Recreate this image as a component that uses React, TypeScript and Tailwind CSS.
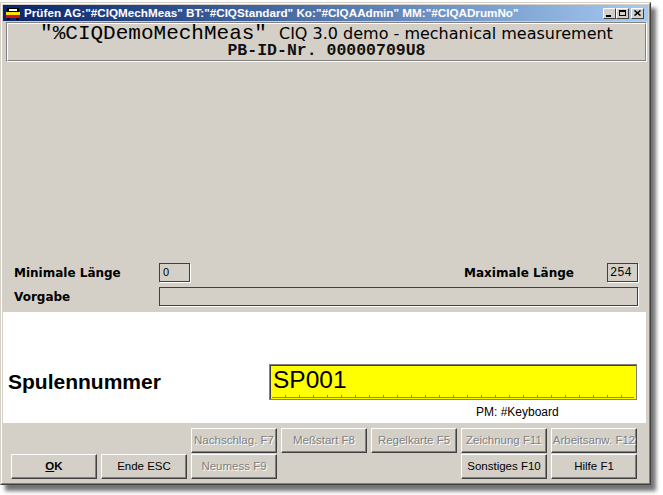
import React from "react";

const sans = "font-['Liberation_Sans',Arial,sans-serif]";
const dejavu = "font-['DejaVu_Sans',Verdana,sans-serif]";
const mono = "font-['Liberation_Mono','Courier_New',monospace]";

const AppIcon = () => (
  <svg width="14" height="13" viewBox="0 0 14 13">
    <rect x="1" y="1" width="12" height="4" fill="#000" />
    <rect x="3" y="2" width="8" height="2" fill="#fff" />
    <rect x="0" y="5" width="14" height="3" fill="#ffe000" />
    <rect x="0" y="8" width="14" height="3" fill="#d01010" />
    <rect x="1" y="11" width="3" height="2" fill="#000" />
    <rect x="10" y="11" width="3" height="2" fill="#000" />
  </svg>
);

const CapButton = ({ children }: { children: React.ReactNode }) => (
  <div className="w-[13px] h-[11px] bg-[#d4d0c8] border border-t-white border-l-white border-r-[#404040] border-b-[#404040] flex items-center justify-center">
    {children}
  </div>
);

const Btn = ({
  label,
  disabled,
  col,
  bold,
}: {
  label: React.ReactNode;
  disabled?: boolean;
  col: string;
  bold?: boolean;
}) => (
  <div
    className={`${col} h-[25px] bg-[#d4d0c8] border border-t-white border-l-white border-r-[#404040] border-b-[#404040] shadow-[inset_-1px_-1px_#808080] flex items-center justify-center text-[11.5px] ${sans} ${
      bold ? "font-bold text-black" : ""
    } ${disabled ? "text-[#808080] [text-shadow:1px_1px_0_#fff]" : "text-black"}`}
  >
    {label}
  </div>
);

export default function App() {
  return (
    <div className="w-[663px] h-[495px] bg-white pt-[2px]">
      {/* window */}
      <div className="w-[651px] h-[483px] border border-t-[#d4d0c8] border-l-[#d4d0c8] border-r-[#404040] border-b-[#404040] shadow-[5px_6px_4px_rgba(0,0,0,0.55)]">
        <div className="h-full border border-t-white border-l-white border-r-[#808080] border-b-[#808080] bg-[#d4d0c8] p-px flex flex-col">
          {/* title bar */}
          <div className="h-[16px] shrink-0 bg-linear-to-r from-[#0a246a] to-[#a6caf0] flex items-center pl-[3px] pr-[4px]">
            <AppIcon />
            <span className={`ml-[4px] text-white font-bold text-[11.7px] leading-none whitespace-nowrap ${sans}`}>
              Prüfen AG:"#CIQMechMeas" BT:"#CIQStandard" Ko:"#CIQAAdmin" MM:"#CIQADrumNo"
            </span>
            <div className="ml-auto flex items-center">
              <CapButton>
                <div className="w-[5px] h-[2px] bg-black mt-[5px] mr-[2px]" />
              </CapButton>
              <CapButton>
                <div className="w-[7px] h-[6px] border border-black border-t-2" />
              </CapButton>
              <div className="w-[2px]" />
              <CapButton>
                <svg width="7" height="6" viewBox="0 0 7 6">
                  <path d="M0.5 0.5 L6.5 5.5 M6.5 0.5 L0.5 5.5" stroke="#000" strokeWidth="1.6" />
                </svg>
              </CapButton>
            </div>
          </div>

          {/* header box */}
          <div className="mt-[1px] ml-[3px] mr-[1px] h-[40px] shrink-0 border border-t-[#808080] border-l-[#808080] border-r-white border-b-white">
            <div className="h-full border border-t-white border-l-white border-r-[#808080] border-b-[#808080] flex flex-col items-center justify-center">
              <div className="flex items-baseline leading-[18px] text-black whitespace-nowrap">
                <span className={`${mono} text-[21px]`}>"%CIQDemoMechMeas"</span>
                <span className={`${dejavu} text-[16px] ml-[12px]`}>CIQ 3.0 demo - mechanical measurement</span>
              </div>
              <div className={`${mono} font-bold text-[16.5px] leading-[16px] text-[#111] whitespace-nowrap`}>
                PB-ID-Nr. 00000709U8
              </div>
            </div>
          </div>

          {/* empty area */}
          <div className="h-[201px] shrink-0" />

          {/* Minimale / Maximale row */}
          <div className="flex items-center h-[19px] pl-[11px] pr-[10px]">
            <span className={`w-[145px] ${dejavu} font-bold text-[12px] text-black`}>Minimale Länge</span>
            <div className={`w-[31px] h-[19px] border border-[#404040] shadow-[1px_1px_0_#fff] flex items-center pl-[3px] text-[11px] ${sans}`}>
              0
            </div>
            <span className={`ml-auto ${dejavu} font-bold text-[12px] text-black`}>Maximale Länge</span>
            <div className={`ml-[33px] w-[31px] h-[19px] border border-[#404040] shadow-[1px_1px_0_#fff] flex items-center pl-[2px] text-[12px] ${mono}`}>
              254
            </div>
          </div>

          {/* Vorgabe row */}
          <div className="flex items-center h-[19px] mt-[5px] pl-[11px] pr-[10px]">
            <span className={`w-[145px] ${dejavu} font-bold text-[12px] text-black`}>Vorgabe</span>
            <div className="flex-1 h-[19px] border border-[#404040] shadow-[1px_1px_0_#fff]" />
          </div>

          {/* white panel */}
          <div className="mt-[6px] mr-[2px] h-[111px] shrink-0 bg-white flex flex-col">
            <div className="mt-[52px] flex items-center h-[36px]">
              <span className={`w-[266px] pl-[5px] ${sans} font-bold text-[21px] text-black`}>Spulennummer</span>
              <div className="flex-1 mr-[9px] h-[36px] bg-[#ffff00] border border-[#808080] shadow-[inset_1px_1px_#404040] flex flex-col">
                <div className={`flex-1 flex items-center pl-[3px] ${sans} text-[24.5px] text-black leading-none`}>SP001</div>
                <div className="h-[3px] mx-[2px] mb-[1px] border-b border-[#808080] bg-[repeating-linear-gradient(to_right,transparent_0px,transparent_13px,#808080_13px,#808080_14px)]" />
              </div>
            </div>
            <div className={`mt-[5px] pl-[473px] ${sans} text-[12px] leading-[14px] text-black`}>PM: #Keyboard</div>
          </div>

          {/* buttons */}
          <div className="mt-[5px] pl-[8px] grid grid-cols-[repeat(7,86px)] gap-x-[4px] gap-y-[1px]">
            <Btn col="col-start-3" label="Nachschlag. F7" disabled />
            <Btn col="col-start-4" label="Meßstart F8" disabled />
            <Btn col="col-start-5" label="Regelkarte F5" disabled />
            <Btn col="col-start-6" label="Zeichnung F11" disabled />
            <Btn col="col-start-7" label="Arbeitsanw. F12" disabled />
            <Btn
              col="col-start-1"
              bold
              label={
                <span>
                  <span className="underline">O</span>K
                </span>
              }
            />
            <Btn col="col-start-2" label="Ende ESC" />
            <Btn col="col-start-3" label="Neumess F9" disabled />
            <Btn col="col-start-6" label="Sonstiges F10" />
            <Btn col="col-start-7" label="Hilfe F1" />
          </div>
        </div>
      </div>
    </div>
  );
}
